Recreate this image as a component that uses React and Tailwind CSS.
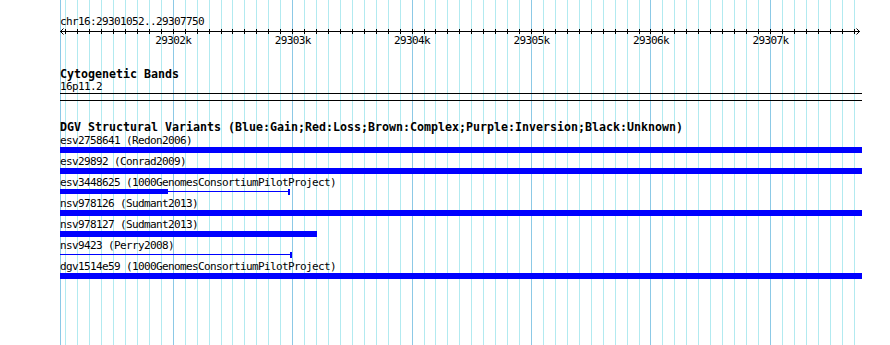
const START = 29301052;
const END = 29307750;
const SPAN = 800;

const px = (bp) => 60 + ((bp - START) * SPAN) / (END - START);

const ticks = [];
for (let bp = 29301100; bp <= 29307700; bp += 100) ticks.push(bp);

const rows = [
  { label: "esv2758641 (Redon2006)", kind: "bar", end: 802 },
  { label: "esv29892 (Conrad2009)", kind: "bar", end: 802 },
  { label: "esv3448625 (1000GenomesConsortiumPilotProject)", kind: "split", thick: 108, end: 228 },
  { label: "nsv978126 (Sudmant2013)", kind: "bar", end: 802 },
  { label: "nsv978127 (Sudmant2013)", kind: "bar", end: 257 },
  { label: "nsv9423 (Perry2008)", kind: "line", end: 230 },
  { label: "dgv1514e59 (1000GenomesConsortiumPilotProject)", kind: "bar", end: 802 },
];

function Grid() {
  return (
    <svg className="absolute left-0 top-0" width="890" height="345" shapeRendering="crispEdges">
      <line x1="60.5" y1="0" x2="60.5" y2="345" stroke="#8cc9e6" />
      {ticks.map((bp) => {
        const x = Math.floor(px(bp)) + 0.5;
        return (
          <line key={bp} x1={x} y1="0" x2={x} y2="345" stroke={bp % 1000 === 0 ? "#8cc9e6" : "#b2eaf0"} />
        );
      })}
    </svg>
  );
}

function Ruler() {
  return (
    <svg className="block" width="802" height="20" shapeRendering="crispEdges">
      <line x1="0" y1="3.5" x2="800" y2="3.5" stroke="#000" />
      {ticks.map((bp) => {
        const x = Math.floor(px(bp) - 60) + 0.5;
        return <line key={bp} x1={x} y1="1" x2={x} y2="6" stroke="#000" />;
      })}
      <path d="M3.5 0.5 L0.5 3.5 L3.5 6.5" fill="none" stroke="#000" shapeRendering="auto" />
      <path d="M796.5 0.5 L799.5 3.5 L796.5 6.5" fill="none" stroke="#000" shapeRendering="auto" />
      {ticks
        .filter((bp) => bp % 1000 === 0)
        .map((bp) => (
          <text
            key={bp}
            x={px(bp) - 60}
            y="16"
            textAnchor="middle"
            fontSize="11"
            letterSpacing="-0.62"
            fontFamily="'DejaVu Sans Mono', monospace"
            fill="#000"
            shapeRendering="auto"
          >
            {bp / 1000}k
          </text>
        ))}
    </svg>
  );
}

function Glyph({ row }) {
  if (row.kind === "bar") {
    return <div className="h-[6px] bg-[#0000ff]" style={{ width: row.end }} />;
  }
  return (
    <svg className="block" width="802" height="6" shapeRendering="crispEdges">
      {row.kind === "split" && <rect x="0" y="0" width={row.thick} height="5" fill="#0000ff" />}
      <line x1="0" y1="2.5" x2={row.end} y2="2.5" stroke="#0000ff" />
      <rect x={row.end} y="0" width="1.5" height="6" fill="#0000ff" />
    </svg>
  );
}

export default function App() {
  return (
    <div className="relative h-[345px] w-[890px] overflow-hidden bg-white font-['DejaVu_Sans_Mono',monospace] text-black">
      <Grid />
      <div className="relative pl-[60px] pt-[15px]">
        <div className="h-[13px] text-[11px] leading-[13px] tracking-[-0.62px] whitespace-nowrap">chr16:29301052..29307750</div>
        <Ruler />

        <div className="mt-[20px] h-[12px] text-[11.63px] font-bold leading-[12px] whitespace-nowrap">Cytogenetic Bands</div>
        <div className="h-[13px] text-[11px] leading-[13px] tracking-[-0.62px] whitespace-nowrap">16p11.2</div>
        <div className="h-[8px] w-[802px] border-y border-black" />

        <div className="mt-[20px] h-[12px] text-[11.63px] font-bold leading-[12px] whitespace-nowrap">
          DGV Structural Variants (Blue:Gain;Red:Loss;Brown:Complex;Purple:Inversion;Black:Unknown)
        </div>
        <div className="mt-[1px] flex flex-col">
          {rows.map((row) => (
            <div key={row.label} className="mb-[2px]">
              <div className="h-[13px] text-[11px] leading-[13px] tracking-[-0.62px] whitespace-nowrap">{row.label}</div>
              <Glyph row={row} />
            </div>
          ))}
        </div>
      </div>
    </div>
  );
}
